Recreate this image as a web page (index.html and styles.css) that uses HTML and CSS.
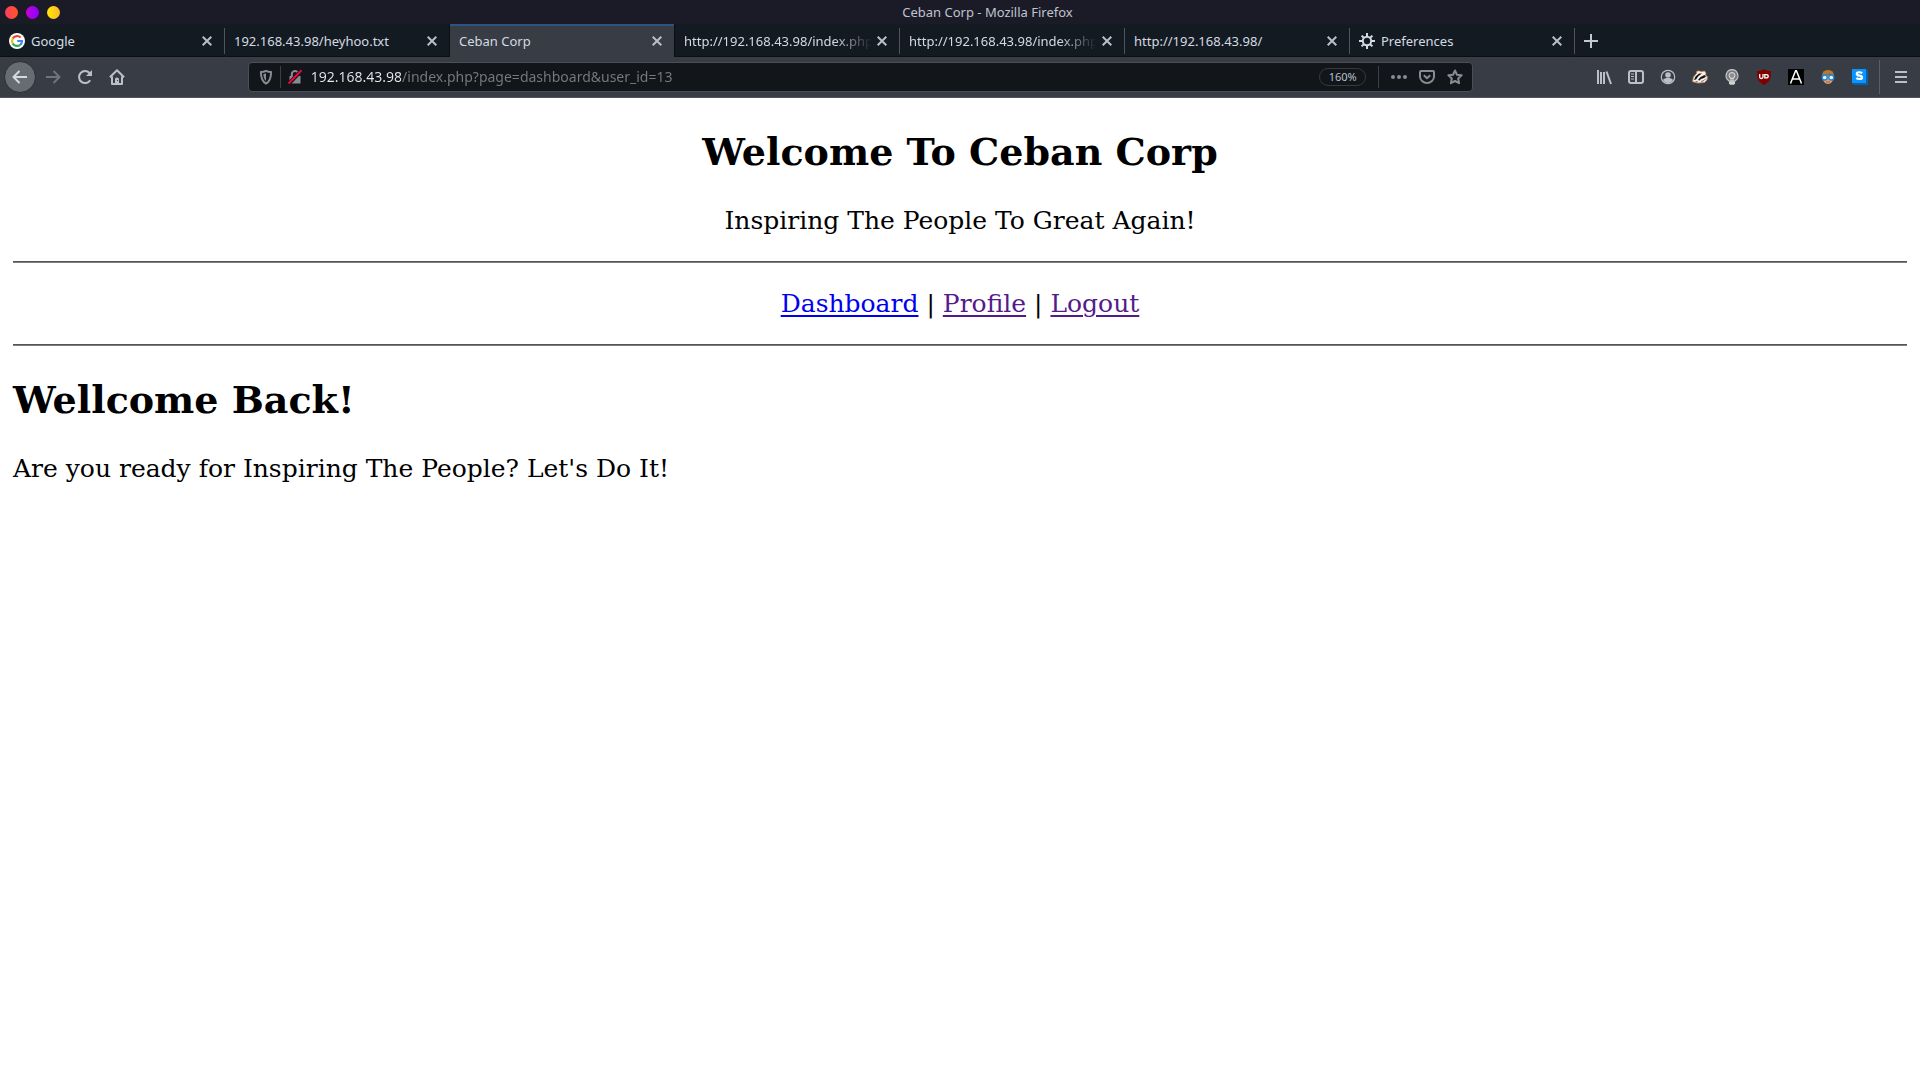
FILE: index.html
```
<!DOCTYPE html>
<html lang="en">
<head>
<meta charset="utf-8">
<title>Ceban Corp</title>
<link rel="stylesheet" href="styles.css">
</head>
<body>
<header class="browser">
  <div class="titlebar">
    <div class="window-buttons">
      <button class="dot dot-close" aria-label="Close window"></button>
      <button class="dot dot-min" aria-label="Minimize window"></button>
      <button class="dot dot-max" aria-label="Maximize window"></button>
    </div>
    <div class="window-title">Ceban Corp - Mozilla Firefox</div>
  </div>

  <div class="tabs">
    <div class="tab">
      <svg class="icon" viewBox="0 0 16 16"><circle cx="8" cy="8" r="8" fill="#fff"/><g fill="none" stroke-width="2.2"><path d="M3.7 5.5A5 5 0 0 1 11.6 4.500" stroke="#ea4335"/><path d="M3.700 5.500a5 5 0 0 0 0 5" stroke="#fbbc05"/><path d="M3.700 10.500a5 5 0 0 0 7.500 1.300" stroke="#34a853"/><path d="M8.200 8h4.800a5 5 0 0 1-1.800 3.800" stroke="#4285f4"/></g></svg>
      <span class="tab-title">Google</span>
      <button class="tab-close" aria-label="Close tab"><svg viewBox="0 0 10 10"><path d="M.7.7l8.600 8.600M9.300.7L.7 9.300"/></svg></button>
    </div>
    <div class="tab">
      <span class="tab-title">192.168.43.98/heyhoo.txt</span>
      <button class="tab-close" aria-label="Close tab"><svg viewBox="0 0 10 10"><path d="M.7.7l8.600 8.600M9.300.7L.7 9.300"/></svg></button>
    </div>
    <div class="tab tab-active">
      <span class="tab-title">Ceban Corp</span>
      <button class="tab-close" aria-label="Close tab"><svg viewBox="0 0 10 10"><path d="M.7.7l8.600 8.600M9.300.7L.7 9.300"/></svg></button>
    </div>
    <div class="tab">
      <span class="tab-title tab-title-long">http://192.168.43.98/index.php</span>
      <button class="tab-close" aria-label="Close tab"><svg viewBox="0 0 10 10"><path d="M.7.7l8.600 8.600M9.300.7L.7 9.300"/></svg></button>
    </div>
    <div class="tab">
      <span class="tab-title tab-title-long">http://192.168.43.98/index.php</span>
      <button class="tab-close" aria-label="Close tab"><svg viewBox="0 0 10 10"><path d="M.7.7l8.600 8.600M9.300.7L.7 9.300"/></svg></button>
    </div>
    <div class="tab">
      <span class="tab-title">http://192.168.43.98/</span>
      <button class="tab-close" aria-label="Close tab"><svg viewBox="0 0 10 10"><path d="M.7.7l8.600 8.600M9.300.7L.7 9.300"/></svg></button>
    </div>
    <div class="tab">
      <svg class="icon" viewBox="0 0 16 16" fill="none" stroke="#d3dae3"><circle cx="8" cy="8" r="4.200" stroke-width="2"/><path stroke-width="2" d="M8 0v3.500M8 12.500V16M0 8h3.500M12.500 8H16M2.600 2.600l2.200 2.200M11.200 11.200l2.200 2.200M2.600 13.400l2.200-2.200M11.200 4.800l2.200-2.200"/></svg>
      <span class="tab-title">Preferences</span>
      <button class="tab-close" aria-label="Close tab"><svg viewBox="0 0 10 10"><path d="M.7.7l8.600 8.600M9.300.7L.7 9.300"/></svg></button>
    </div>
    <button class="new-tab" aria-label="New tab"><svg viewBox="0 0 14 14"><path d="M7 0v14M0 7h14"/></svg></button>
  </div>

  <div class="toolbar">
    <button class="tool tool-back" aria-label="Back"><svg class="icon line" viewBox="0 0 16 16"><path d="M15 8H1.500M7.500 2L1.500 8l6 6"/></svg></button>
    <button class="tool tool-off" aria-label="Forward"><svg class="icon line" viewBox="0 0 16 16"><path d="M1 8h13.500M8.500 2l6 6-6 6"/></svg></button>
    <button class="tool" aria-label="Reload"><svg class="icon line" viewBox="0 0 16 16"><path d="M13.200 11.200A6 6 0 1 1 12.500 4"/><path d="M15 1v6H9z" fill="currentColor" stroke="none"/></svg></button>
    <button class="tool" aria-label="Home"><svg class="icon line" viewBox="0 0 16 16"><path d="M.9 8.300L8 1.300l7.100 7M3 7.500V15h10V7.500"/><path d="M6 15v-4.500c0-1.200.8-2 2-2s2 .8 2 2V15z" fill="currentColor" stroke="none"/><path d="M8.500 11v1" stroke="#383c45" stroke-width="1"/></svg></button>

    <form class="urlbar">
      <button type="button" class="url-tool" aria-label="Tracking protection"><svg class="icon line" viewBox="0 0 16 16"><path d="M8 1.900c1.600.8 3.300 1.100 5.100 1.100 0 5.500-.9 9.300-5.100 11.600C3.800 12.300 2.900 8.500 2.900 3 4.700 3 6.400 2.700 8 1.900z"/><path d="M8 4.200c-.9.400-1.700.6-2.600.8.100 3.200.8 5.400 2.600 7z" fill="currentColor" stroke="none"/></svg></button>
      <span class="url-rule"></span>
      <button type="button" class="url-tool" aria-label="Connection is not secure"><svg class="icon" viewBox="0 0 16 16"><path d="M4.800 7V5.200a3.200 3.200 0 0 1 6.400 0V7" fill="none" stroke="currentColor" stroke-width="2"/><path d="M2.500 7h11v7.500h-11z" fill="currentColor"/><path d="M1 15.500L15 1" stroke="#12161b" stroke-width="4"/><path d="M1.500 14.500L14.500 1.200" stroke="#f0043c" stroke-width="2"/></svg></button>
      <input class="url-input" type="text" aria-label="Address" value="192.168.43.98/index.php?page=dashboard&amp;user_id=13">
      <button type="button" class="zoom-level">160%</button>
      <span class="url-rule"></span>
      <div class="url-actions">
        <button type="button" class="url-tool" aria-label="Page actions"><svg class="icon" viewBox="0 0 16 16" fill="currentColor"><circle cx="2" cy="8" r="2"/><circle cx="8" cy="8" r="2"/><circle cx="14" cy="8" r="2"/></svg></button>
        <button type="button" class="url-tool" aria-label="Save to Pocket"><svg class="icon line" viewBox="0 0 16 16"><path d="M2 2h12a1 1 0 0 1 1 1v4.500a7 6.500 0 0 1-14 0V3a1 1 0 0 1 1-1zM4.800 6.200L8 9.300l3.200-3.100"/></svg></button>
        <button type="button" class="url-tool" aria-label="Bookmark"><svg class="icon line" viewBox="0 0 16 16"><path d="M8 1.500l2 4.200 4.600.6-3.400 3.200.9 4.700L8 12l-4.100 2.200.9-4.700L1.400 6.300 6 5.700z"/></svg></button>
      </div>
    </form>

    <div class="extensions">
      <button class="tool" aria-label="Library"><svg class="icon line" viewBox="0 0 16 16"><path d="M2 1v14M5 3v12M8 3v12M10.500 2.500L15 15"/></svg></button>
      <button class="tool" aria-label="Sidebars"><svg class="icon line" viewBox="0 0 16 16"><rect x="1" y="2" width="14" height="12" rx="2"/><path d="M8 2v12"/><path d="M3 5h3M3 7.500h3M3 10h3" stroke-width="1"/></svg></button>
      <button class="tool" aria-label="Account"><svg class="icon" viewBox="0 0 16 16"><circle cx="8" cy="8" r="6.700" fill="none" stroke="currentColor" stroke-width="1.200"/><circle cx="8" cy="6" r="2.800" fill="currentColor"/><path d="M3 11c1-1.600 2.500-2 5-2s4 .4 5 2a5.700 5.700 0 0 1-10 0z" fill="currentColor"/></svg></button>
      <button class="tool" aria-label="Privacy Badger"><svg class="icon" viewBox="0 0 16 16"><path d="M.5 12.500L1.500 8 4.500 4.500 5 2h3l1 .8L12.500 2l1.500 2-.5 2L15.500 8l-.5 3-2.500 2.500-6 .5-3-.5z" fill="#f7f0ea" stroke="#c98450" stroke-width=".8"/><path d="M2 11l1.500-3.500L7 4.500h3L6.500 7 4 10.500zM6 11l2.500-3 4-2L14 7.500 12 9l-3 1-1.500 1.500z" fill="#161616"/><path d="M9 12.500l3-1 2-2M3.500 12.500h2" fill="none" stroke="#777"/></svg></button>
      <button class="tool" aria-label="Lightbulb"><svg class="icon" viewBox="0 0 16 16"><path d="M8 .7a6 6 0 0 1 3.200 11V12H4.800v-.3A6 6 0 0 1 8 .7z" fill="#77797d" stroke="#c4c4c4" stroke-width="1.200"/><circle cx="8" cy="6.500" r="3" fill="#8d8f92" stroke="#e0e0e0"/><path d="M7 9v3.500M9 9v3.500" stroke="#e0e0e0"/><path d="M5 12.300h6v2L10 15.700H6l-1-1.400z" fill="#d2d2d2"/></svg></button>
      <button class="tool" aria-label="uBlock Origin"><svg class="icon" viewBox="0 0 16 16"><path d="M8 0c2 1.400 4.300 2 7 2 0 7-.5 10.500-7 14C1.500 12.500 1 9 1 2c2.700 0 5-.6 7-2z" fill="#800000"/><path d="M3.700 5v3c0 1 .5 1.500 1.500 1.500S7 9 7 8V5M8.800 5.600v3.300h1.400c1.200 0 2-.6 2-1.700 0-1-.8-1.600-2-1.600z" fill="none" stroke="#fff" stroke-width="1.300"/></svg></button>
      <button class="tool" aria-label="Font changer"><svg class="icon" viewBox="0 0 16 16"><rect width="16" height="16" fill="#000"/><path d="M2.500 14.500L7.600 1.800h.8l5.100 12.700M4.500 10h7" fill="none" stroke="#fff" stroke-width="1.500"/></svg></button>
      <button class="tool" aria-label="User agent"><svg class="icon" viewBox="0 0 16 16"><path d="M1.800 8C1.500 3.500 4 1 8 1s6.500 2.500 6.200 7L13 12H3z" fill="#9a6528"/><path d="M3.500 6.500h9V12c-1 2-2.700 3-4.500 3s-3.500-1-4.500-3z" fill="#e2a06c"/><path d="M2.500 6.500C6 6.500 8.500 5.500 9.500 3.500c.5 1.700 2 2.700 4 3L12.500 2.500 8 1 3.500 2.500z" fill="#b57a36"/><circle cx="4.700" cy="8.500" r="2.500" fill="#dff1ff" stroke="#1585dd" stroke-width="1.300"/><circle cx="11.300" cy="8.500" r="2.500" fill="#dff1ff" stroke="#1585dd" stroke-width="1.300"/><path d="M6 13h4" stroke="#b5503c"/></svg></button>
      <button class="tool" aria-label="Stylus"><svg class="icon" viewBox="0 0 16 16"><path d="M0 0h14l2 2v14H2l-2-2z" fill="#0661a8"/><path d="M0 0h14v14H0z" fill="#0a94ff"/><path d="M10.200 4.200C8.500 3 4.800 2.700 4.800 4.900c0 2.400 5.200 1.200 5.200 3.500 0 2.200-4 1.800-5.700.7" fill="none" stroke="#fff" stroke-width="2.200"/></svg></button>
    </div>
    <span class="tool-rule"></span>
    <button class="tool tool-menu" aria-label="Menu"><svg class="icon line" viewBox="0 0 16 16"><path d="M2 3h12M2 8h12M2 13h12"/></svg></button>
  </div>
</header>

<main class="page">
  <div class="masthead">
    <h2>Welcome To Ceban Corp</h2>
    <p>Inspiring The People To Great Again!</p>
  </div>
  <hr>
  <nav class="links"><a class="current" href="#dashboard">Dashboard</a> | <a href="#profile">Profile</a> | <a href="#logout">Logout</a></nav>
  <hr>
  <h2>Wellcome Back!</h2>
  <p>Are you ready for Inspiring The People? Let's Do It!</p>
</main>
</body>
</html>
```
FILE: styles.css
```
* { box-sizing: border-box; }

body {
  margin: 0;
  background: #fff;
}

button {
  margin: 0;
  padding: 0;
  border: 0;
  background: none;
  color: inherit;
  font: inherit;
}

svg { display: block; }

.browser {
  color: #d3dae3;
  font: 13px/18px "Noto Sans", sans-serif;
}

.icon {
  flex: none;
  width: 16px;
  height: 16px;
}

.line {
  fill: none;
  stroke: currentColor;
  stroke-width: 2;
  stroke-linejoin: round;
}

/* Window title */
.titlebar {
  display: flex;
  align-items: center;
  height: 24px;
  padding: 0 5px;
  background: #1a1b26;
  color: #c0c4cf;
}

.window-buttons {
  display: flex;
  gap: 8px;
}

.dot {
  width: 13px;
  height: 13px;
  border-radius: 50%;
}

.dot-close { background: linear-gradient(90deg, #ff3d63, #ff5722); }
.dot-min { background: linear-gradient(90deg, #c800d8, #8a00ff); }
.dot-max { background: linear-gradient(90deg, #ffea00, #ffb52e); }

.window-title {
  flex: 1;
  text-align: center;
}

/* Tab strip */
.tabs {
  display: flex;
  height: 33px;
  background: #141a21;
  box-shadow: inset 0 -1px #0b0e12;
}

.tab {
  display: flex;
  flex: 0 1 225px;
  align-items: center;
  gap: 6px;
  min-width: 0;
  padding: 1px 12px 0 9px;
  border-right: 1px solid;
  border-image: linear-gradient(#141a21 5px, #50555c 5px, #50555c 29px, #141a21 29px) 1;
}

.tab-active {
  border-image: none;
  border-color: #0b0e12;
  background: #383c45;
  box-shadow: inset 0 2px #2b547e, -1px 0 #0b0e12;
}

.tab-title {
  flex: 1;
  min-width: 0;
  overflow: hidden;
  white-space: nowrap;
}

.tab-title-long {
  -webkit-mask-image: linear-gradient(90deg, #000 150px, transparent 188px);
  mask-image: linear-gradient(90deg, #000 150px, transparent 188px);
}

.tab-close svg {
  width: 10px;
  height: 10px;
  fill: none;
  stroke: #b9bfc8;
  stroke-width: 2;
}

.new-tab { padding: 0 9px; }

.new-tab svg {
  width: 14px;
  height: 14px;
  stroke: #c3c9d2;
  stroke-width: 2;
}

/* Navigation toolbar */
.toolbar {
  display: flex;
  align-items: center;
  height: 41px;
  padding: 0 3px 1px 4px;
  border-bottom: 1px solid #50545c;
  background: #383c45;
  color: #b9c0cb;
}

.tool {
  display: flex;
  flex: none;
  align-items: center;
  justify-content: center;
  width: 32px;
  height: 32px;
}

.tool-back {
  margin-right: 1px;
  border: 1px solid #2b2e35;
  border-radius: 50%;
  background: #686b71;
  color: #d3dae3;
}

.tool-off { color: #6f747d; }

.urlbar {
  display: flex;
  flex: 1;
  align-items: center;
  height: 30px;
  min-width: 0;
  margin: 0 6%;
  padding: 0 3px;
  border: 1px solid #4a4e57;
  border-radius: 4px;
  background: #12161b;
}

.url-tool {
  padding: 0 6px;
  color: #888c92;
}

.url-rule {
  width: 1px;
  height: 22px;
  background: #3c4046;
}

.url-input {
  flex: 1;
  min-width: 0;
  padding: 0 2px;
  border: 0;
  /* the host part is brighter than the path */
  background: linear-gradient(90deg, #e4e8ee 92px, #777b80 92px);
  -webkit-background-clip: text;
  background-clip: text;
  -webkit-text-fill-color: transparent;
  font: 14px/20px "Noto Sans", sans-serif;
}

.zoom-level {
  width: 47px;
  height: 18px;
  margin-right: 12px;
  border: 1px solid #363a3f;
  border-radius: 9px;
  font-size: 11px;
  line-height: 16px;
}

.url-actions {
  display: flex;
  padding-left: 6px;
}

.extensions { display: flex; }

.tool-rule {
  width: 1px;
  height: 34px;
  margin: 0 5px 0 3px;
  background: #5a5e66;
}

/* Web page */
.page {
  display: flow-root;
  padding: 0 13px;
  color: #000;
  font: 25px/30px "DejaVu Serif", serif;
}

.page h2 {
  margin: 32px 0;
  font-size: 38px;
  line-height: 44px;
}

.page p { margin: 25px 0; }

.masthead,
.links { text-align: center; }

.links { line-height: 31px; }

.page hr {
  height: 2px;
  margin: 25px 0;
  border: 0;
  border-top: 1px solid #555;
  border-bottom: 1px solid #7d7d7d;
}

.links a {
  color: #551a8b;
  text-decoration-thickness: 2px;
  text-underline-offset: 3px;
}

.links .current { color: #0000ee; }
```
